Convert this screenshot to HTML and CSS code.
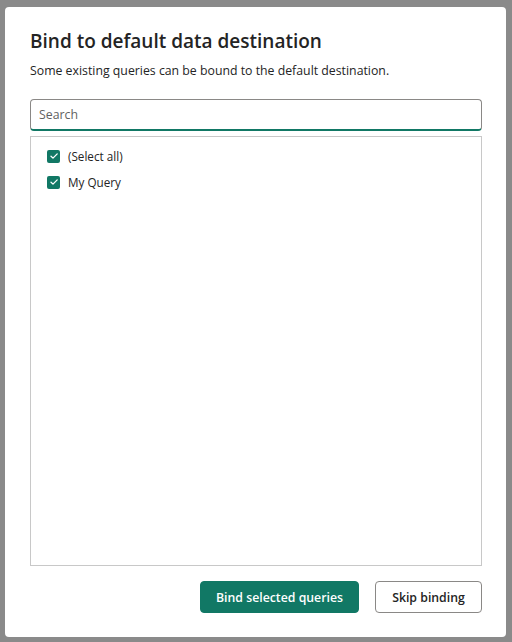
FILE: index.html
```html
<!DOCTYPE html>
<html>
<head>
<meta charset="utf-8">
<link rel="stylesheet" href="styles.css">
</head>
<body>
<div class="overlay">
  <div class="dialog">
    <h1 class="title">Bind to default data destination</h1>
    <p class="subtitle">Some existing queries can be bound to the default destination.</p>
    <div class="search">
      <input class="search-input" type="text" placeholder="Search">
    </div>
    <div class="list">
      <label class="item">
        <span class="check"><svg viewBox="0 0 12 12" width="12" height="12"><path d="M3 6.2 L5 8.1 L9.2 3.9" fill="none" stroke="#fff" stroke-width="1.3" stroke-linecap="round" stroke-linejoin="round"/></svg></span>
        <span class="label">(Select all)</span>
      </label>
      <label class="item">
        <span class="check"><svg viewBox="0 0 12 12" width="12" height="12"><path d="M3 6.2 L5 8.1 L9.2 3.9" fill="none" stroke="#fff" stroke-width="1.3" stroke-linecap="round" stroke-linejoin="round"/></svg></span>
        <span class="label">My Query</span>
      </label>
    </div>
    <div class="actions">
      <button class="btn primary">Bind selected queries</button>
      <button class="btn secondary">Skip binding</button>
    </div>
  </div>
</div>
</body>
</html>
```

FILE: styles.css
```css
* { box-sizing: border-box; }
html, body {
  margin: 0;
  padding: 0;
  width: 512px;
  height: 642px;
  overflow: hidden;
}
body {
  background: #8a8a8a;
  font-family: "Open Sans", "Noto Sans", sans-serif;
  color: #242424;
}
.overlay {
  padding: 7px 6px 5px 5px;
  height: 642px;
}
.dialog {
  background: #fff;
  border-radius: 4px;
  height: 630px;
  padding: 21px 24px 24px 25px;
  display: flex;
  flex-direction: column;
}
.title {
  margin: 0;
  font-size: 19px;
  font-weight: 600;
  line-height: 26px;
  color: #242424;
}
.subtitle {
  margin: 7px 0 0 0;
  font-size: 12.3px;
  line-height: 20px;
  color: #242424;
}
.search {
  margin-top: 18px;
}
.search-input {
  display: block;
  width: 100%;
  height: 32px;
  border: 1px solid #8a8886;
  border-bottom: 2px solid #117865;
  border-radius: 4px;
  padding: 0 8px;
  font-family: inherit;
  font-size: 12.3px;
  color: #242424;
  outline: none;
}
.search-input::placeholder { color: #616161; }
.list {
  margin-top: 5px;
  flex: 1;
  border: 1px solid #c8c8c8;
  padding: 9px 16px;
  display: flex;
  flex-direction: column;
  gap: 6px;
}
.item {
  display: flex;
  align-items: center;
  height: 20px;
  gap: 8px;
  font-size: 11.7px;
  line-height: 20px;
}
.check {
  width: 13px;
  height: 13px;
  background: #117865;
  border-radius: 2px;
  display: flex;
  align-items: center;
  justify-content: center;
  flex: none;
}
.check svg { display: block; }
.actions {
  margin-top: 15px;
  display: flex;
  justify-content: flex-end;
  gap: 16px;
}
.btn {
  height: 32px;
  border-radius: 4px;
  font-family: inherit;
  font-size: 12.3px;
  font-weight: 600;
  padding: 0;
  white-space: nowrap;
}
.primary {
  background: #117865;
  color: #fff;
  border: 1px solid #117865;
  width: 159px;
}
.secondary {
  background: #fff;
  color: #242424;
  border: 1px solid #8a8886;
  width: 107px;
}
```
